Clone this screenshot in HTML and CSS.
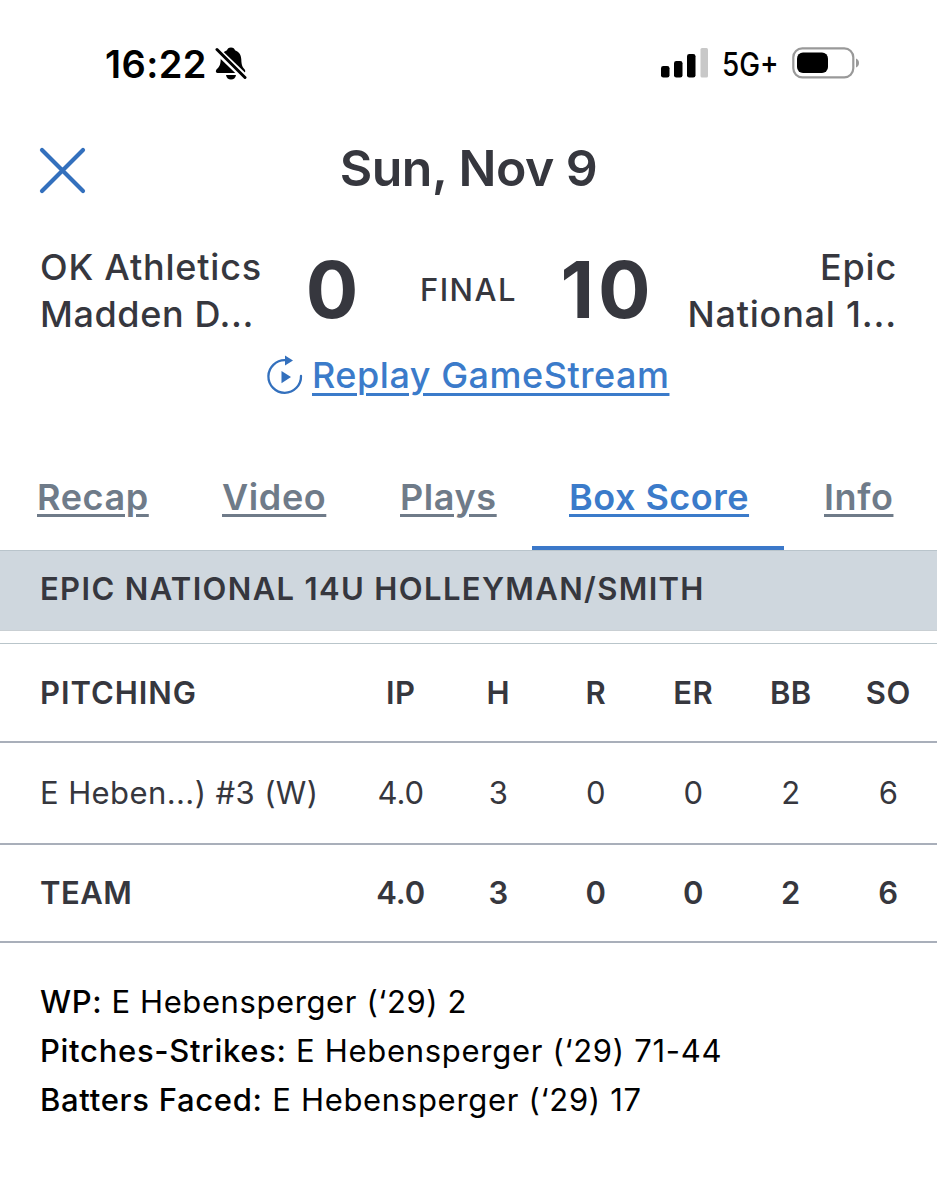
FILE: index.html
```html
<!DOCTYPE html>
<html lang="en">
<head>
<meta charset="utf-8">
<title>Box Score</title>
<link rel="stylesheet" href="styles.css">
</head>
<body>
<header class="status">
  <div class="status-left">
    <span class="time">16:22</span>
    <svg class="bell" width="32" height="36" viewBox="0 0 32 36">
      <path d="M16 1.500c2.300 0 3.600 1.200 4 2.700 4.200 1.500 6.200 5 6.300 9.300.1 6 1.500 8 3.200 9.800 1 1 1.200 3.700-.7 3.700H2.500c-2 0-2-2.400-.8-3.700C4 21 5.500 19.500 5.700 13.500 5.800 9.200 7.800 5.700 12 4.200c.4-1.500 1.700-2.700 4-2.700z"/>
      <path d="M11 29h10c-.5 3-2.400 4.500-5 4.500S11.500 32 11 29z"/>
      <path class="slash-gap" d="M1 3.500L31 32.500"/>
      <path class="slash" d="M2 3.500L30 31.500"/>
    </svg>
  </div>
  <div class="status-right">
    <svg width="47" height="30" viewBox="0 0 47 30">
      <rect x="0" y="18" width="8.500" height="11.500" rx="2.300"/>
      <rect x="13" y="13" width="8.500" height="16.500" rx="2.300"/>
      <rect x="26" y="6" width="8.500" height="23.500" rx="2.300"/>
      <rect class="bar-off" x="39.500" y="0" width="7.500" height="29.500" rx="1.500"/>
    </svg>
    <span class="network">5G+</span>
    <svg class="battery" width="68" height="32" viewBox="0 0 68 32">
      <rect class="shell" x="1.300" y="1.300" width="60" height="29" rx="9"/>
      <rect x="5" y="5.500" width="31" height="20.500" rx="6"/>
      <path class="tip" d="M64 11.500c4 1.500 4 7.500 0 9z"/>
    </svg>
  </div>
</header>

<div class="title-bar">
  <svg class="close" width="47" height="47" viewBox="0 0 47 47"><path d="M3 3L44 44M44 3L3 44"/></svg>
  <h1 class="title">Sun, Nov 9</h1>
</div>

<section class="scoreboard">
  <div class="team">OK Athletics<br><span class="tight">Madden D...</span></div>
  <div class="score">0</div>
  <div class="state">FINAL</div>
  <div class="score home">10</div>
  <div class="team team-home">Epic<br>National 1...</div>
</section>

<div class="replay">
  <svg width="36" height="40" viewBox="0 0 36 40">
    <path class="ring" d="M18.500 5.200A16.300 16.300 0 1 0 34 21"/>
    <path d="M18 .5L26 5.500L18 10.500zM14.500 16L24 22L14.500 28.300z"/>
  </svg>
  <a class="replay-link">Replay GameStream</a>
</div>

<nav class="tabs">
  <a class="tab recap">Recap</a>
  <a class="tab video">Video</a>
  <a class="tab plays">Plays</a>
  <a class="tab active">Box Score</a>
  <a class="tab info">Info</a>
</nav>

<h2 class="band">EPIC NATIONAL 14U HOLLEYMAN/SMITH</h2>

<section class="table">
  <div class="row head"><span class="name">PITCHING</span><span>IP</span><span>H</span><span>R</span><span>ER</span><span>BB</span><span>SO</span></div>
  <div class="row player"><span class="name">E Heben...) #3 (W)</span><span>4.0</span><span>3</span><span>0</span><span>0</span><span>2</span><span>6</span></div>
  <div class="row total"><span class="name">TEAM</span><span>4.0</span><span>3</span><span>0</span><span>0</span><span>2</span><span>6</span></div>
</section>

<section class="notes">
  <p class="wild"><b>WP:</b> E Hebensperger (‘29) 2</p>
  <p><b>Pitches-Strikes:</b> E Hebensperger (‘29) 71-44</p>
  <p><b>Batters Faced:</b> E Hebensperger (‘29) 17</p>
</section>
</body>
</html>
```
FILE: styles.css
```css
* { box-sizing: border-box; }
body {
  margin: 0;
  width: 937px;
  height: 1200px;
  overflow: hidden;
  background: #fff;
  color: #36373e;
  font-family: Inter, "Liberation Sans", sans-serif;
  white-space: nowrap;
}
svg { display: block; flex: none; }
.status {
  height: 128px;
  padding: 0 77px 0 105px;
  display: flex;
  justify-content: space-between;
  color: #000;
}
.status-left { display: flex; height: 128px; align-items: center; gap: 8px; }
.time { font-size: 38px; font-weight: 600; letter-spacing: 0.400px; }
.slash-gap { stroke: #fff; stroke-width: 7; }
.slash { stroke: #000; stroke-width: 3; stroke-linecap: round; }
.status-right { display: flex; height: 126px; align-items: center; }
.bar-off { fill: #c8c8c8; }
.network {
  width: 56px;
  margin: 3px 14px 0 14px;
  font-size: 32px;
  font-weight: 500;
  transform: scaleX(0.870);
  transform-origin: left center;
}
.shell { fill: none; stroke: #999; stroke-width: 2.200; }
.tip { fill: #999; }

.title-bar { height: 80px; padding: 0 39px; display: grid; grid-template-columns: 47px 1fr 47px; align-items: center; }
.close { margin-top: 5px; fill: none; stroke: #3370bd; stroke-width: 4.200; stroke-linecap: round; }
.title { margin: 0; text-align: center; font-size: 50px; font-weight: 600; line-height: 80px; letter-spacing: -0.500px; }

.scoreboard { height: 94px; margin-top: 35px; padding: 0 40px; display: grid; grid-template-columns: 241px 102px 171px 103px 1fr; align-items: center; }
.team { font-size: 36px; font-weight: 500; line-height: 47px; letter-spacing: 0.800px; padding-top: 1px; }
.tight { letter-spacing: 0.600px; }
.team-home { text-align: right; }
.score { font-size: 78px; font-weight: 700; line-height: 92px; text-align: center; margin-top: -1px; }
.home { letter-spacing: 4px; text-indent: 4px; }
.state { font-size: 31px; font-weight: 500; text-align: center; letter-spacing: 1.500px; margin-top: -2px; }

.replay { height: 76px; display: flex; align-items: center; padding-left: 267px; gap: 9px; color: #3b7bca; fill: #3370bd; }
.ring { fill: none; stroke: #3370bd; stroke-width: 2.300; stroke-linecap: round; }
.replay-link { font-size: 36px; font-weight: 500; letter-spacing: 0.520px; text-decoration: underline 3px; text-underline-offset: 5px; }

.tabs {
  height: 138px;
  padding: 30px 0 0 37px;
  display: flex;
  align-items: stretch;
  border-bottom: 1px solid #b9c4cb;
  line-height: 108px;
  font-size: 36px;
  font-weight: 600;
  letter-spacing: 0.600px;
  color: #6f7b89;
}
.tab { text-decoration: underline 3px; text-underline-offset: 4px; flex: none; }
.recap { width: 185px; }
.video { width: 178px; }
.plays { width: 132px; }
.active { width: 252px; height: 107px; border-bottom: 4px solid #3b78c9; color: #3b7bca; padding-left: 37px; margin-right: 40px; letter-spacing: 0.500px; }

.band { margin: 0; height: 80px; padding-left: 40px; line-height: 76px; font-size: 31px; font-weight: 600; letter-spacing: 1.350px; background: #cfd7de; border-bottom: 1px solid #c9cfd3; }

.table { margin-top: 12px; border-top: 1px solid #b9c5ca; font-size: 31px; }
.row { display: grid; grid-template-columns: 312px repeat(6, 97.500px); padding-left: 40px; text-align: center; border-bottom: 2px solid #a9afba; }
.name { text-align: left; }
.head { height: 99px; line-height: 98px; font-weight: 600; letter-spacing: 0.400px; }
.head .name { letter-spacing: 0.950px; }
.player { height: 102px; line-height: 99px; }
.player .name { letter-spacing: 0.400px; }
.total { height: 98px; line-height: 95px; font-weight: 600; }
.total .name { letter-spacing: 0.500px; }

.notes { padding: 34px 40px 0; color: #000; font-size: 31px; line-height: 49px; letter-spacing: 0.700px; }
.notes p { margin: 0; }
.notes b { font-weight: 500; }
.wild { letter-spacing: 0.600px; }
```
